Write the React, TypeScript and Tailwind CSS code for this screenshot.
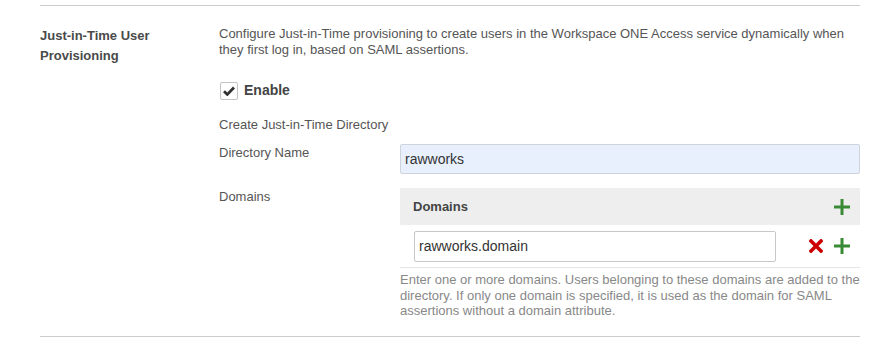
import { useState } from 'react';

function PlusIcon() {
  return (
    <svg width="18" height="18" viewBox="0 0 18 18" className="block">
      <path d="M9 1v16M1 9h16" stroke="#3a8a35" strokeWidth="3" />
    </svg>
  );
}

function RemoveIcon() {
  return (
    <svg width="14" height="14" viewBox="0 0 14 14" className="block">
      <path d="M2 2l10 10M12 2L2 12" stroke="#cc0000" strokeWidth="3.6" strokeLinecap="square" />
    </svg>
  );
}

export default function App() {
  const [enabled, setEnabled] = useState(true);
  const [dirName, setDirName] = useState('rawworks');
  const [domain, setDomain] = useState('rawworks.domain');

  return (
    <div className="w-[888px] h-[340px] bg-white pt-[5px] pl-[40px] font-['Liberation_Sans',Arial,sans-serif]">
      <div className="w-[820px] border-t border-b border-[#cccccc] h-[332px] grid grid-cols-[179px_1fr]">
        {/* Section label */}
        <div className="pt-[20px] text-[13px] leading-[20px] font-bold text-[#4a4a4a]">
          Just-in-Time User<br />Provisioning
        </div>

        {/* Section body */}
        <div className="pt-[20px]">
          <p className="text-[13px] leading-[16px] text-[#555555] pr-[10px]">
            Configure Just-in-Time provisioning to create users in the Workspace ONE Access service dynamically when they first log in, based on SAML assertions.
          </p>

          <label className="mt-[22px] flex items-center gap-[6px] cursor-pointer">
            <span
              onClick={() => setEnabled(!enabled)}
              className="ml-[1px] w-[18px] h-[18px] border border-[#c4c4c4] rounded-[2px] bg-white flex items-center justify-center"
            >
              {enabled && (
                <svg width="12" height="10" viewBox="0 0 12 10">
                  <path d="M1 5.2l3.3 3.2L11 1.6" fill="none" stroke="#333333" strokeWidth="2.8" />
                </svg>
              )}
            </span>
            <span className="text-[14px] font-bold text-[#444444]">Enable</span>
          </label>

          <div className="mt-[16px] text-[13px] leading-[16px] text-[#555555]">Create Just-in-Time Directory</div>

          <div className="mt-[11px] grid grid-cols-[181px_1fr]">
            <div className="pt-[1px] text-[13px] leading-[16px] text-[#555555]">Directory Name</div>
            <input
              value={dirName}
              onChange={(e) => setDirName(e.target.value)}
              className="h-[30px] w-[460px] px-[4px] border border-[#cfd4dc] rounded-[2px] bg-[#e8f0fe] text-[14px] text-[#333333] outline-none"
            />
          </div>

          <div className="mt-[14px] grid grid-cols-[181px_1fr]">
            <div className="pt-[1px] text-[13px] leading-[16px] text-[#555555]">Domains</div>
            <div className="w-[460px]">
              <div className="h-[37px] bg-[#eeeeee] flex items-center justify-between pl-[13px] pr-[9px]">
                <span className="text-[13px] font-bold text-[#444444]">Domains</span>
                <PlusIcon />
              </div>
              <div className="h-[43px] flex items-center border-b border-[#e6e6e6] pl-[14px] pr-[9px]">
                <input
                  value={domain}
                  onChange={(e) => setDomain(e.target.value)}
                  className="h-[31px] w-[362px] px-[4px] border border-[#c8c8c8] rounded-[2px] bg-white text-[14px] text-[#333333] outline-none"
                />
                <div className="ml-auto flex items-center gap-[10px]">
                  <RemoveIcon />
                  <PlusIcon />
                </div>
              </div>
              <p className="mt-[4px] w-[468px] text-[13px] leading-[15.5px] text-[#888888]">
                Enter one or more domains. Users belonging to these domains are added to the directory. If only one domain is specified, it is used as the domain for SAML assertions without a domain attribute.
              </p>
            </div>
          </div>
        </div>
      </div>
    </div>
  );
}
